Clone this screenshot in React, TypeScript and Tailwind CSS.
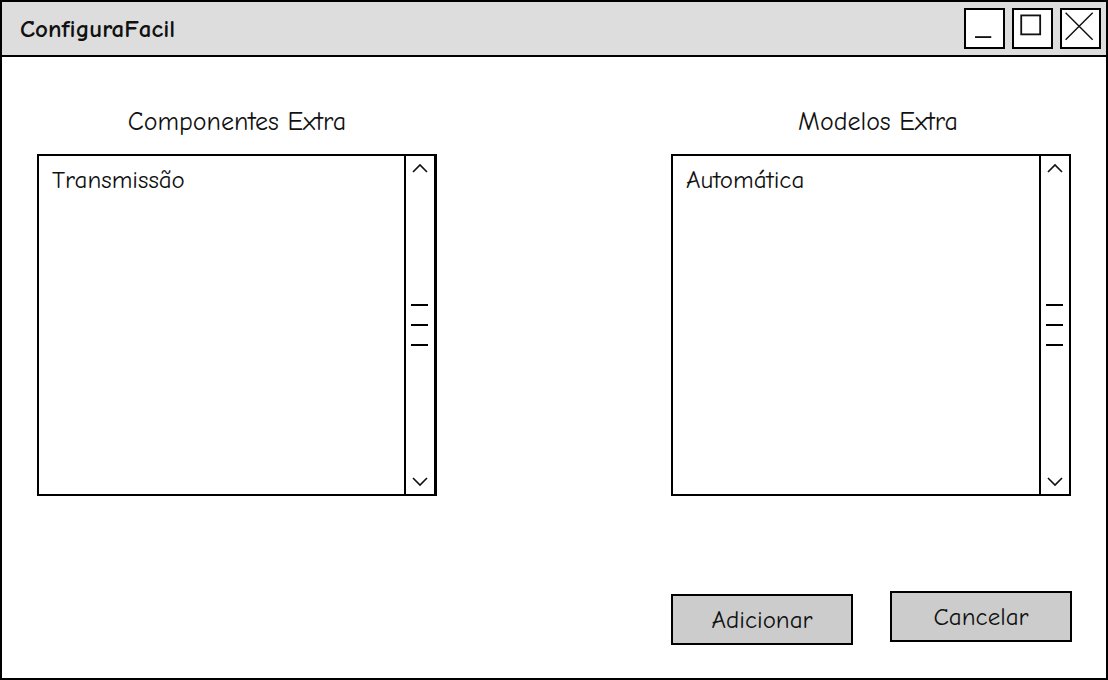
import React from "react"

const font = "font-['Comic_Sans_MS','Comic_Neue','DejaVu_Sans',sans-serif]"

const Chevron = ({ up }: { up?: boolean }) => (
    <svg width="18" height="12" viewBox="0 0 18 12" className="block">
        <path
            d={up ? "M2 10 L9 3 L16 10" : "M2 2 L9 9 L16 2"}
            fill="none"
            stroke="#111"
            strokeWidth="1.6"
        />
    </svg>
)

const ListBox = ({ item, thick }: { item: string; thick?: boolean }) => (
    <div className={`flex h-[342px] w-[400px] border-2 border-black bg-white ${thick ? "border-r-[3px]" : ""}`}>
        <div className="flex-1 px-[13px] pt-[8px] text-[25px] leading-[32px] text-[#111]">{item}</div>
        <div className="flex w-[30px] flex-col items-center justify-between border-l-2 border-black py-[6px]">
            <Chevron up />
            <div className="flex flex-col gap-[18px] pr-[2px]">
                <span className="block h-[2px] w-[17px] bg-black" />
                <span className="block h-[2px] w-[17px] bg-black" />
                <span className="block h-[2px] w-[17px] bg-black" />
            </div>
            <Chevron />
        </div>
    </div>
)

const WinButton = ({ children }: { children: React.ReactNode }) => (
    <div className="flex h-[41px] w-[41px] items-center justify-center border-2 border-black bg-white">
        {children}
    </div>
)

export default function App() {
    return (
        <div className={`${font} flex h-[680px] w-[1108px] flex-col border-2 border-black bg-white text-[#111]`}>
            <div className="flex h-[55px] items-center justify-between border-b-2 border-black bg-[#dddddd] pl-[18px] pr-[5px]">
                <span className="text-[25px] font-bold leading-[30px]">ConfiguraFacil</span>
                <div className="flex gap-[7px]">
                    <WinButton>
                        <svg width="41" height="41" viewBox="0 0 41 41">
                            <path d="M10 30 H28" stroke="#111" strokeWidth="2" />
                        </svg>
                    </WinButton>
                    <WinButton>
                        <svg width="41" height="41" viewBox="0 0 41 41">
                            <rect x="8" y="6" width="21" height="21" fill="none" stroke="#111" strokeWidth="2" />
                        </svg>
                    </WinButton>
                    <WinButton>
                        <svg width="41" height="41" viewBox="0 0 41 41">
                            <path d="M4 3 L34 33 M34 3 L4 33" stroke="#111" strokeWidth="1.6" />
                        </svg>
                    </WinButton>
                </div>
            </div>

            <div className="flex flex-1 flex-col pl-[35px] pr-[35px]">
                <div className="flex justify-between pt-[49px]">
                    <div className="flex w-[400px] flex-col items-center">
                        <div className="h-[32px] text-[26px] leading-[32px]">Componentes Extra</div>
                        <div className="mt-[16px]">
                            <ListBox item="Transmissão" thick />
                        </div>
                    </div>
                    <div className="flex w-[400px] flex-col items-center">
                        <div className="h-[32px] pl-[14px] text-[26px] leading-[32px]">Modelos Extra</div>
                        <div className="mt-[16px]">
                            <ListBox item="Automática" />
                        </div>
                    </div>
                </div>

                <div className="-mr-px mt-[95px] flex justify-end gap-[37px]">
                    <button className="mt-[3px] h-[51px] w-[182px] border-2 border-black bg-[#cccccc] text-[25px]">
                        Adicionar
                    </button>
                    <button className="h-[51px] w-[182px] border-2 border-black bg-[#cccccc] text-[25px]">
                        Cancelar
                    </button>
                </div>
            </div>
        </div>
    )
}
